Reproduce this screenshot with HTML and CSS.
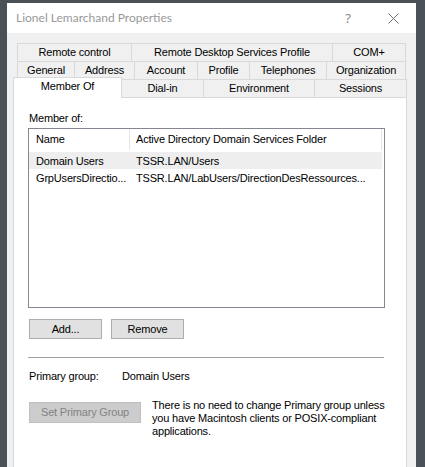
FILE: index.html
```html
<!DOCTYPE html>
<html>
<head>
<meta charset="utf-8">
<title>Lionel Lemarchand Properties</title>
<link rel="stylesheet" href="styles.css">
</head>
<body>
<div class="window">
  <div class="titlebar">
    <span class="title">Lionel Lemarchand Properties</span>
    <span class="help">?</span>
    <svg class="close" width="11" height="11" viewBox="0 0 11 11"><path d="M0.5 0.5L10.5 10.5M10.5 0.5L0.5 10.5" stroke="#6f6f6f" stroke-width="1"/></svg>
  </div>
  <div class="client">
    <div class="tabrow">
      <div class="tab w114">Remote control</div>
      <div class="tab w201">Remote Desktop Services Profile</div>
      <div class="tab w74 last">COM+</div>
    </div>
    <div class="tabrow">
      <div class="tab w57">General</div>
      <div class="tab w60">Address</div>
      <div class="tab w63">Account</div>
      <div class="tab w52">Profile</div>
      <div class="tab w77">Telephones</div>
      <div class="tab w80 last">Organization</div>
    </div>
    <div class="tabrow row3">
      <div class="tab selected">Member Of</div>
      <div class="tab w81 nol">Dial-in</div>
      <div class="tab w111">Environment</div>
      <div class="tab w93 last">Sessions</div>
    </div>
    <div class="panel">
      <div class="label">Member of:</div>
      <div class="listbox">
        <div class="lrow lhead">
          <div class="cell c1 hdiv">Name</div>
          <div class="cell c2 hdiv">Active Directory Domain Services Folder</div>
        </div>
        <div class="lrow hl">
          <div class="cell c1">Domain Users</div>
          <div class="cell c2">TSSR.LAN/Users</div>
        </div>
        <div class="lrow">
          <div class="cell c1">GrpUsersDirectio...</div>
          <div class="cell c2">TSSR.LAN/LabUsers/DirectionDesRessources...</div>
        </div>
      </div>
      <div class="btnrow">
        <div class="btn">Add...</div>
        <div class="btn">Remove</div>
      </div>
      <div class="sep"></div>
      <div class="pgrow">
        <span class="pglabel">Primary group:</span>
        <span>Domain Users</span>
      </div>
      <div class="setrow">
        <div class="btn disabled">Set Primary Group</div>
        <p class="note">There is no need to change Primary group unless you have Macintosh clients or POSIX-compliant applications.</p>
      </div>
    </div>
  </div>
</div>
</body>
</html>
```
FILE: styles.css
```css
* { box-sizing: border-box; }
html, body { margin: 0; }
body {
  background: #4a5157;
  height: 467px;
  overflow: hidden;
  padding: 3px 9px 0 7px;
  font-family: "Liberation Sans", Arial, sans-serif;
  font-size: 11px;
  letter-spacing: -0.18px;
  color: #000;
}
.window {
  background: #f0f0f0;
  height: 480px;
  display: flex;
  flex-direction: column;
}
.titlebar {
  height: 30px;
  background: #fff;
  display: flex;
  align-items: center;
  padding: 0 17px 0 9px;
}
.title {
  flex: 1;
  font-family: "Lato", "Noto Sans", sans-serif;
  font-size: 12px;
  letter-spacing: 0;
  color: #999;
  padding-bottom: 1px;
}
.help {
  font-family: "Noto Sans", sans-serif;
  font-size: 13px;
  letter-spacing: 0;
  color: #888;
  margin-right: 37px;
}
.close { display: block; }
.client {
  flex: 1;
  display: flex;
  flex-direction: column;
  padding: 10px 9px 0 6px;
}
.tabrow {
  display: flex;
  height: 18px;
  margin-left: 4px;
}
.tab {
  height: 18px;
  border-top: 1px solid #d9d9d9;
  border-left: 1px solid #d9d9d9;
  text-align: center;
  line-height: 17px;
  white-space: nowrap;
  background: #f0f0f0;
}
.tab.last { border-right: 1px solid #d9d9d9; }
.tab.nol { border-left: none; }
.w52 { width: 52px; }
.w57 { width: 57px; }
.w60 { width: 60px; }
.w63 { width: 63px; }
.w74 { width: 74px; }
.w77 { width: 77px; }
.w80 { width: 80px; }
.w81 { width: 81px; }
.w93 { width: 93px; }
.w111 { width: 111px; }
.w114 { width: 114px; }
.w201 { width: 201px; }
.row3 { margin-left: 0; align-items: flex-start; }
.tab.selected {
  position: relative;
  z-index: 1;
  width: 109px;
  height: 21px;
  margin-top: -2px;
  background: #fff;
  border-right: 1px solid #d9d9d9;
  line-height: 16px;
}
.panel {
  flex: 1;
  background: #fff;
  border: 1px solid #d9d9d9;
  padding: 14px 0 0 14px;
}
.label {
  line-height: 13px;
  padding-left: 1px;
}
.listbox {
  margin-top: 3px;
  width: 357px;
  height: 180px;
  border: 1px solid #828790;
  background: #fff;
}
.lrow {
  width: 353px;
  display: grid;
  grid-template-columns: 101px 1fr;
  height: 17px;
  align-items: center;
}
.lhead { height: 23px; }
.hl { background: #eeeeee; }
.cell {
  white-space: nowrap;
  overflow: hidden;
}
.c1 { padding-left: 7px; }
.c2 { padding-left: 6px; }
.hdiv {
  height: 21px;
  line-height: 21px;
  border-right: 1px solid #e5e5e5;
  align-self: start;
}
.btnrow {
  display: flex;
  gap: 9px;
  margin-top: 11px;
  padding-left: 1px;
}
.btn {
  width: 73px;
  height: 20px;
  background: #e1e1e1;
  border: 1px solid #adadad;
  text-align: center;
  line-height: 18px;
}
.sep {
  margin-top: 18px;
  width: 356px;
  height: 1px;
  background: #a0a0a0;
}
.pgrow {
  margin-top: 12px;
  padding-left: 1px;
  line-height: 13px;
  display: flex;
}
.pglabel { width: 93px; }
.setrow {
  display: flex;
  align-items: flex-start;
  margin-top: 19px;
  padding-left: 1px;
}
.btn.disabled {
  width: 112px;
  height: 21px;
  line-height: 19px;
  background: #cccccc;
  border-color: #bfbfbf;
  color: #838383;
}
.note {
  margin: -3px 0 0 11px;
  width: 236px;
  line-height: 13px;
}
```
